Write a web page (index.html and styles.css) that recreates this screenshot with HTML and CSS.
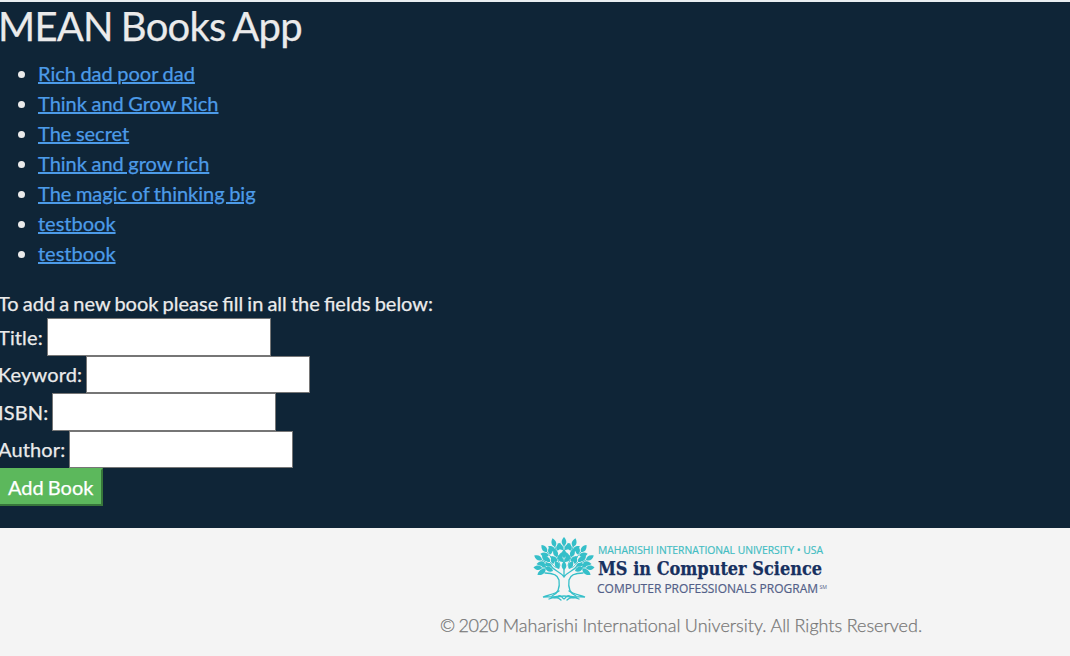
FILE: index.html
```html
<!DOCTYPE html>
<html lang="en">
<head>
<meta charset="utf-8">
<title>MEAN Books App</title>
<link rel="stylesheet" href="styles.css">
</head>
<body>
<div class="page">
  <main class="content">
    <h1 class="title">MEAN Books App</h1>
    <ul class="books">
      <li><a class="link" href="#">Rich dad poor dad</a></li>
      <li><a class="link" href="#">Think and Grow Rich</a></li>
      <li><a class="link" href="#">The secret</a></li>
      <li><a class="link" href="#">Think and grow rich</a></li>
      <li><a class="link" href="#">The magic of thinking big</a></li>
      <li><a class="link" href="#">testbook</a></li>
      <li><a class="link" href="#">testbook</a></li>
    </ul>
    <form class="form">
      <div class="intro">To add a new book please fill in all the fields below:</div>
      <label class="row"><span>Title:</span><input class="field" type="text"></label>
      <label class="row"><span>Keyword:</span><input class="field" type="text"></label>
      <label class="row isbn"><span>ISBN:</span><input class="field" type="text"></label>
      <label class="row"><span>Author:</span><input class="field" type="text"></label>
      <button class="add" type="button">Add Book</button>
    </form>
  </main>
  <footer class="footer">
    <svg class="logo" width="300" height="70" viewBox="0 0 300 70" role="img" aria-label="Maharishi International University">
      <defs>
        <path id="leaf" d="M0 0C-3.200-2.200-3-5.800 0-9C3-5.800 3.200-2.200 0 0Z"/>
        <g id="sprig">
          <use href="#leaf"/>
          <use href="#leaf" transform="translate(-1 4) rotate(-38) scale(.95)"/>
          <use href="#leaf" transform="translate(1 4) rotate(38) scale(.95)"/>
          <path class="twig" d="M0-1V9"/>
        </g>
      </defs>
      <g class="tree">
        <use href="#sprig" transform="translate(34 11)"/>
        <use href="#sprig" transform="translate(25 12) rotate(-16)"/>
        <use href="#sprig" transform="translate(43 12) rotate(16)"/>
        <use href="#sprig" transform="translate(17 17) rotate(-38)"/>
        <use href="#sprig" transform="translate(51 17) rotate(38)"/>
        <use href="#sprig" transform="translate(12 25) rotate(-60)"/>
        <use href="#sprig" transform="translate(56 25) rotate(60)"/>
        <use href="#sprig" transform="translate(12 33) rotate(-86) scale(.95)"/>
        <use href="#sprig" transform="translate(56 33) rotate(86) scale(.95)"/>
        <use href="#leaf" transform="translate(15 35) rotate(-122)"/>
        <use href="#leaf" transform="translate(53 35) rotate(122)"/>
        <use href="#sprig" transform="translate(34 23)"/>
        <use href="#sprig" transform="translate(27 22) rotate(-20)"/>
        <use href="#sprig" transform="translate(41 22) rotate(20)"/>
        <use href="#sprig" transform="translate(20 27) rotate(-44) scale(.9)"/>
        <use href="#sprig" transform="translate(48 27) rotate(44) scale(.9)"/>
        <use href="#leaf" transform="translate(29 34) rotate(-24)"/>
        <use href="#leaf" transform="translate(39 34) rotate(24)"/>
        <use href="#leaf" transform="translate(34 35)"/>
        <use href="#leaf" transform="translate(23 36) rotate(-65)"/>
        <use href="#leaf" transform="translate(45 36) rotate(65)"/>
        <path class="bark" d="M15 38C23 38 28 40 29 45C30 52 29 58 22 61L34 59L46 61C39 58 38 52 39 45C40 40 45 38 53 38L43 37L48 30L40 36L34 40L28 36L20 30L25 37Z"/>
        <path class="trunk" d="M15 38C23 38 28 40 29 45C30 52 29 58 22 61M53 38C45 38 40 40 39 45C38 52 39 58 46 61M20 30C25 37 30 36 34 42C38 36 43 37 48 30M34 25V41"/>
        <path class="root" d="M29 56C25 59 18 60 13 62C19 61 24 63 28 61C31 59 32 63 34 64C36 63 37 59 40 61C44 63 49 61 55 62C50 60 43 59 39 56M19 64Q27 61 31 65M49 64Q41 61 37 65M25 63Q34 59 43 63"/>
      </g>
      <text class="logo-top" x="68" y="18.500" textLength="225" lengthAdjust="spacingAndGlyphs">MAHARISHI INTERNATIONAL UNIVERSITY • USA</text>
      <text class="logo-main" x="68" y="39.500" textLength="224" lengthAdjust="spacingAndGlyphs">MS in Computer Science</text>
      <text class="logo-sub" x="67" y="58" textLength="221" lengthAdjust="spacingAndGlyphs">COMPUTER PROFESSIONALS PROGRAM</text>
      <text class="logo-mark" x="289.500" y="54" textLength="7.500" lengthAdjust="spacingAndGlyphs">SM</text>
    </svg>
    <p class="copyright"><span class="year">© 2020</span> Maharishi International University. All Rights Reserved.</p>
  </footer>
</div>
</body>
</html>
```

FILE: styles.css
```css
* { box-sizing: border-box; }
body {
  margin: 0;
  background: #f4f4f4;
  color: #ebebeb;
  font: 400 20px/30px Lato, sans-serif;
  word-spacing: -1px;
  -webkit-text-stroke: .25px;
}
.page { margin-left: -2px; border-top: 2px solid #e9eef1; }
.content { height: 526px; background: #0f2537; }
.title {
  margin: 0 0 8px;
  height: 48px;
  font-size: 40px;
  font-weight: 400;
  line-height: 48px;
  letter-spacing: -.75px;
  word-spacing: -1.500px;
}
.books { margin: 0 0 20px; padding-left: 40px; }
.link { color: #4c9be8; text-decoration: underline; word-spacing: -.6px; }
.form { display: flex; flex-direction: column; align-items: flex-start; }
.row { display: flex; align-items: center; gap: 4px; height: 37.500px; }
.row span { letter-spacing: .13px; }
.isbn { gap: 3.500px; }
.intro { height: 30px; }
.field {
  width: 224px;
  height: 37.500px;
  margin: 0;
  padding: 1px 2px;
  border: 1px solid #767676;
  background: #fff;
  font: inherit;
}
.add {
  height: 38px;
  padding: 1px 8px;
  border: 2px solid;
  border-color: #5cb85c #37763a #37763a #5cb85c;
  background: #5cb85c;
  color: #fff;
  font: inherit;
  word-spacing: -1px;
  -webkit-text-stroke: .25px;
}
.footer {
  display: flex;
  flex-direction: column;
  align-items: center;
  padding: 7px 0 0 294px;
  color: #777;
}
.logo { display: block; overflow: visible; word-spacing: 0; -webkit-text-stroke: 0; margin-right: 2px; }
.copyright { margin: 6px 0 0; font-size: 18px; font-weight: 300; line-height: 28px; word-spacing: -.4px; }
.year { letter-spacing: -.5px; }
.tree { fill: #35bfc9; }
.twig { fill: none; stroke: #35bfc9; stroke-width: .8; }
.bark { fill: #f4f4f4; }
.trunk, .root { fill: none; stroke: #35bfc9; stroke-width: 1.300; stroke-linecap: round; }
.logo-top { fill: #43bdc3; stroke: #43bdc3; stroke-width: .2; font: 400 10.500px "Open Sans", sans-serif; }
.logo-main { fill: #17305f; stroke: #17305f; stroke-width: .25; font: 700 18.500px "DejaVu Serif", serif; }
.logo-sub { fill: #535f88; stroke: #535f88; stroke-width: .2; font: 400 12.500px "Open Sans", sans-serif; }
.logo-mark { fill: #535f88; font: 400 5px "Open Sans", sans-serif; }
```
